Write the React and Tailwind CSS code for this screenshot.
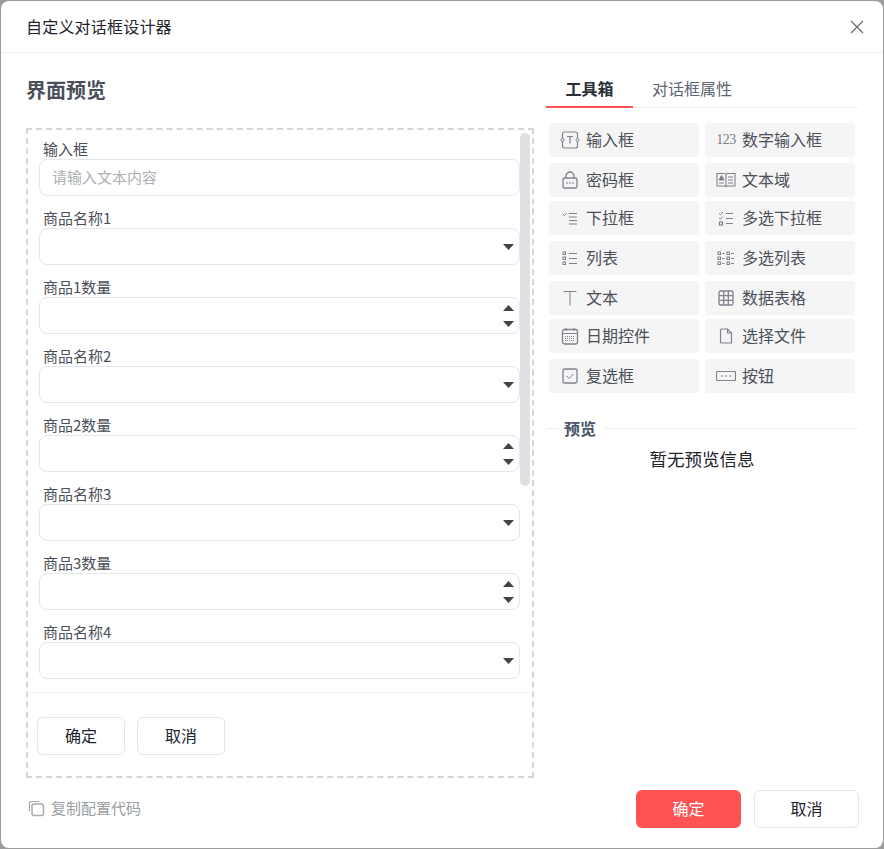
import { useState } from "react";

const stroke = "#7f828e";

function Ico({ w = 18, h = 18, children }) {
  return (
    <svg width={w} height={h} viewBox={`0 0 ${w} ${h}`} fill="none" stroke={stroke} strokeWidth="1">
      {children}
    </svg>
  );
}

const icons = {
  input: (
    <Ico w={20} h={18}>
      <rect x="2.500" y="1" width="15" height="16" rx="2" strokeWidth="1.200" />
      <path d="M7 5.500h6M10 5.500v7" strokeWidth="1.200" />
      <circle cx="2.500" cy="9" r="1.500" fill="#f5f5f5" />
      <circle cx="17.500" cy="9" r="1.500" fill="#f5f5f5" />
    </Ico>
  ),
  number: <span className="text-[14px] leading-none tracking-[-0.5px] text-[#7d808c] font-['Liberation_Serif',serif]">123</span>,
  password: (
    <Ico w={16} h={18}>
      <rect x="1" y="7" width="14" height="10" rx="1.500" strokeWidth="1.300" />
      <path d="M4 7V5a4 4 0 0 1 8 0v2" strokeWidth="1.300" />
      <path d="M4.300 12h1.400M7.300 12h1.400M10.300 12h1.400" strokeWidth="1.600" />
    </Ico>
  ),
  textarea: (
    <Ico w={20} h={16}>
      <path d="M1 1.500h7.500c.8 0 1.500.7 1.500 1.500v12c0-.6-.7-1-1.500-1H1zM19 1.500h-7.500c-.8 0-1.500.7-1.500 1.500v12c0-.6.7-1 1.500-1H19z" strokeWidth="1.100" />
      <path d="M3 8l2.500-4.500L8 8z" fill={stroke} />
      <path d="M3 11h5M12 5h5M12 8h5M12 11h5" />
    </Ico>
  ),
  select: (
    <Ico w={16} h={15}>
      <path d="M1 3.500l1.500 1L5 2" />
      <path d="M7 2.500h8M7 6h8M7 9.500h8M7 13h8" />
    </Ico>
  ),
  multiSelect: (
    <Ico w={16} h={15}>
      <path d="M1 2.500l1.500 1.200L5 1M1 7l1.500 1.200L5 5.500" />
      <rect x="1.500" y="11" width="3" height="3" strokeWidth="1.200" />
      <path d="M8 2.500h7M8 7.500h7M8 12.500h7" />
    </Ico>
  ),
  list: (
    <Ico w={16} h={15}>
      <rect x="1" y="1" width="2.500" height="2.500" />
      <rect x="1" y="6" width="2.500" height="2.500" />
      <rect x="1" y="11" width="2.500" height="2.500" />
      <path d="M7 2.500h8M7 7.500h8M7 12.500h8" />
    </Ico>
  ),
  multiList: (
    <Ico w={18} h={15}>
      <rect x="1" y="1" width="2.500" height="2.500" />
      <rect x="1" y="6" width="2.500" height="2.500" />
      <rect x="1" y="11" width="2.500" height="2.500" />
      <path d="M5 2.500h2.500M5 7.500h2.500M5 12.500h2.500" />
      <rect x="10" y="1" width="2.500" height="2.500" />
      <rect x="10" y="6" width="2.500" height="2.500" />
      <rect x="10" y="11" width="2.500" height="2.500" />
      <path d="M14 2.500h3M14 7.500h3M14 12.500h3" />
    </Ico>
  ),
  text: (
    <Ico w={16} h={16}>
      <path d="M1.500 1.500h13M8 1.500v14" />
    </Ico>
  ),
  table: (
    <Ico w={16} h={16}>
      <rect x="1" y="1" width="14" height="14" rx="1.500" strokeWidth="1.300" />
      <path d="M5.700 1v14M10.300 1v14M1 5.700h14M1 10.300h14" strokeWidth="1.300" />
    </Ico>
  ),
  date: (
    <Ico w={18} h={18}>
      <rect x="1.500" y="2.500" width="15" height="14.500" rx="2" strokeWidth="1.300" />
      <path d="M1.500 6.500h15M5 1v3M13 1v3" strokeWidth="1.200" />
      <path d="M4 9.500h10M4 11.500h10M4 13.500h10" strokeDasharray="1 1" />
    </Ico>
  ),
  file: (
    <Ico w={14} h={16}>
      <path d="M2.500 1h6l4 4v9c0 .6-.4 1-1 1h-9c-.6 0-1-.4-1-1V2c0-.6.4-1 1-1z" strokeWidth="1.200" />
      <path d="M8.500 1v4h4" strokeWidth="1.100" />
    </Ico>
  ),
  checkbox: (
    <Ico w={16} h={16}>
      <rect x="1" y="1" width="14" height="14" rx="1.500" strokeWidth="1.300" />
      <path d="M4.500 8l2.500 2.500 4.500-4.500" />
    </Ico>
  ),
  button: (
    <Ico w={20} h={10}>
      <rect x="0.500" y="0.500" width="19" height="9" rx="1.500" strokeWidth="1.200" />
      <path d="M5 5h1.400M9.300 5h1.400M13.600 5H15" strokeWidth="1.500" />
    </Ico>
  ),
};

const tools = [
  { label: "输入框", icon: "input", cls: "" },
  { label: "数字输入框", icon: "number", cls: "" },
  { label: "密码框", icon: "password", cls: "mt-[6px]" },
  { label: "文本域", icon: "textarea", cls: "mt-[6px]" },
  { label: "下拉框", icon: "select", cls: "mt-[4px]" },
  { label: "多选下拉框", icon: "multiSelect", cls: "mt-[4px]" },
  { label: "列表", icon: "list", cls: "mt-[6px]" },
  { label: "多选列表", icon: "multiList", cls: "mt-[6px]" },
  { label: "文本", icon: "text", cls: "mt-[6px]" },
  { label: "数据表格", icon: "table", cls: "mt-[6px]" },
  { label: "日期控件", icon: "date", cls: "mt-[4px]" },
  { label: "选择文件", icon: "file", cls: "mt-[4px]" },
  { label: "复选框", icon: "checkbox", cls: "mt-[6px]" },
  { label: "按钮", icon: "button", cls: "mt-[6px]" },
];

const fields = [
  { label: "输入框", type: "text" },
  { label: "商品名称1", type: "select" },
  { label: "商品1数量", type: "number" },
  { label: "商品名称2", type: "select" },
  { label: "商品2数量", type: "number" },
  { label: "商品名称3", type: "select" },
  { label: "商品3数量", type: "number" },
  { label: "商品名称4", type: "select" },
];

function Arrow({ up }) {
  return (
    <svg width="11" height="6" viewBox="0 0 11 6" fill="#444">
      <path d={up ? "M5.500 0L11 6H0z" : "M0 0h11L5.500 6z"} />
    </svg>
  );
}

function Field({ field }) {
  return (
    <div className="h-[69px]">
      <div className="h-[29px] pl-[4px] pt-[8px] text-[15px] leading-[22px] text-[#4b4f58]">{field.label}</div>
      <div className="flex h-[37px] w-[481px] items-center justify-between rounded-[8px] border border-[#e3e5ea] bg-white pl-[12px] pr-[5px]">
        <span className="pb-[1px] text-[15px] text-[#adb0b5]">{field.type === "text" ? "请输入文本内容" : ""}</span>
        {field.type === "select" && <Arrow />}
        {field.type === "number" && (
          <div className="flex flex-col gap-[10px]">
            <Arrow up />
            <Arrow />
          </div>
        )}
      </div>
    </div>
  );
}

export default function App() {
  const [tab, setTab] = useState("tools");

  return (
    <div className="h-[849px] w-[884px] bg-[#9c9c9c] p-[1px] font-['Noto_Sans_CJK_SC','Noto_Sans',sans-serif]">
      <div className="flex h-[847px] flex-col rounded-[8px] bg-white">
        <header className="flex h-[52px] shrink-0 items-center justify-between border-b border-[#eceef1] pl-[25px] pr-[19px]">
          <h1 className="pb-[2px] text-[16px] font-normal tracking-[0.2px] text-[#20232a]">自定义对话框设计器</h1>
          <button aria-label="关闭" className="text-[#6b6b6b]">
            <svg width="14" height="14" viewBox="0 0 14 14" stroke="currentColor" strokeWidth="1.200">
              <path d="M1 1l12 12M13 1L1 13" />
            </svg>
          </button>
        </header>

        <div className="flex min-h-0 flex-1 pl-[25px] pr-[25px]">
          <section className="w-[508px] shrink-0">
            <h2 className="mt-[22px] h-[30px] text-[20px] font-bold leading-[30px] text-[#4a4f5a]">界面预览</h2>
            <div className="relative mt-[23px] h-[650px] w-[508px] border-2 border-dashed border-[#d5d6da] pl-[11px]">
              <div className="h-[562px] overflow-hidden">
                {fields.map((f) => <Field key={f.label} field={f} />)}
              </div>
              <div className="absolute right-[2px] top-[3px] h-[353px] w-[10px] rounded-[5px] bg-[#dfe0e4]" />
              <div className="absolute left-[1px] right-[2px] top-[562px] border-t border-[#eceef1]" />
              <div className="absolute left-[9px] top-[587px] flex gap-[12px]">
                <button className="h-[38px] w-[88px] rounded-[6px] border border-[#e3e5ea] bg-white pb-[2px] text-[16px] text-[#20232a]">确定</button>
                <button className="h-[38px] w-[88px] rounded-[6px] border border-[#e3e5ea] bg-white pb-[2px] text-[16px] text-[#20232a]">取消</button>
              </div>
            </div>
            <div className="mt-[19px] flex items-center gap-[6px] pl-[2px] text-[15px] leading-[22px] text-[#9a9da3]">
              <svg width="17" height="17" viewBox="0 0 17 17" fill="none" stroke="#a8aaaf" strokeWidth="1.200">
                <path d="M1.500 11.500V2.500c0-.6.400-1 1-1h9" />
                <rect x="4" y="4" width="11.500" height="11.500" rx="2" strokeWidth="1.500" />
              </svg>
              复制配置代码
            </div>
          </section>

          <aside className="ml-[12px] flex min-w-0 flex-1 flex-col">
            <div className="mt-[20px] flex h-[35px] border-b border-[#eceef1]">
              <button onClick={() => setTab("tools")} className="-mb-[1px] h-[35px] w-[87px] border-b-2 border-[#ff5252] pb-[4px] text-[16px] font-bold text-[#2b2f38]">工具箱</button>
              <button onClick={() => setTab("props")} className="ml-[19px] h-[34px] pb-[4px] text-[16px] text-[#5d6472]">对话框属性</button>
            </div>

            <div className="mt-[15px] flex w-[306px] translate-x-[3px] flex-wrap justify-between">
              {tools.map((t) => (
                <div key={t.label} className={`flex h-[34px] w-[150px] items-center rounded-[4px] bg-[#f5f5f5] ${t.cls}`}>
                  <span className="flex w-[37px] shrink-0 items-center justify-center pl-[5px]">{icons[t.icon]}</span>
                  <span className="pb-[2px] text-[16px] text-[#4b4f58]">{t.label}</span>
                </div>
              ))}
            </div>

            <div className="mt-[24px] flex items-center">
              <span className="w-[18px] border-t border-[#eceef1]" />
              <span className="text-[16px] font-bold leading-[22px] text-[#4a5568]">预览</span>
              <span className="ml-[8px] flex-1 border-t border-[#eceef1]" />
            </div>
            <p className="mt-[7px] text-center text-[17.500px] leading-[26px] text-[#20232a]">暂无预览信息</p>

            <div className="mt-auto mb-[20px] flex justify-end gap-[13px] pl-[2px]">
              <button className="h-[38px] w-[105px] translate-x-[1px] rounded-[6px] bg-[#ff5252] pb-[2px] text-[16px] text-white">确定</button>
              <button className="h-[38px] w-[105px] translate-x-[1px] rounded-[6px] border border-[#e3e5ea] bg-white pb-[2px] text-[16px] text-[#20232a]">取消</button>
            </div>
          </aside>
        </div>
      </div>
    </div>
  );
}
